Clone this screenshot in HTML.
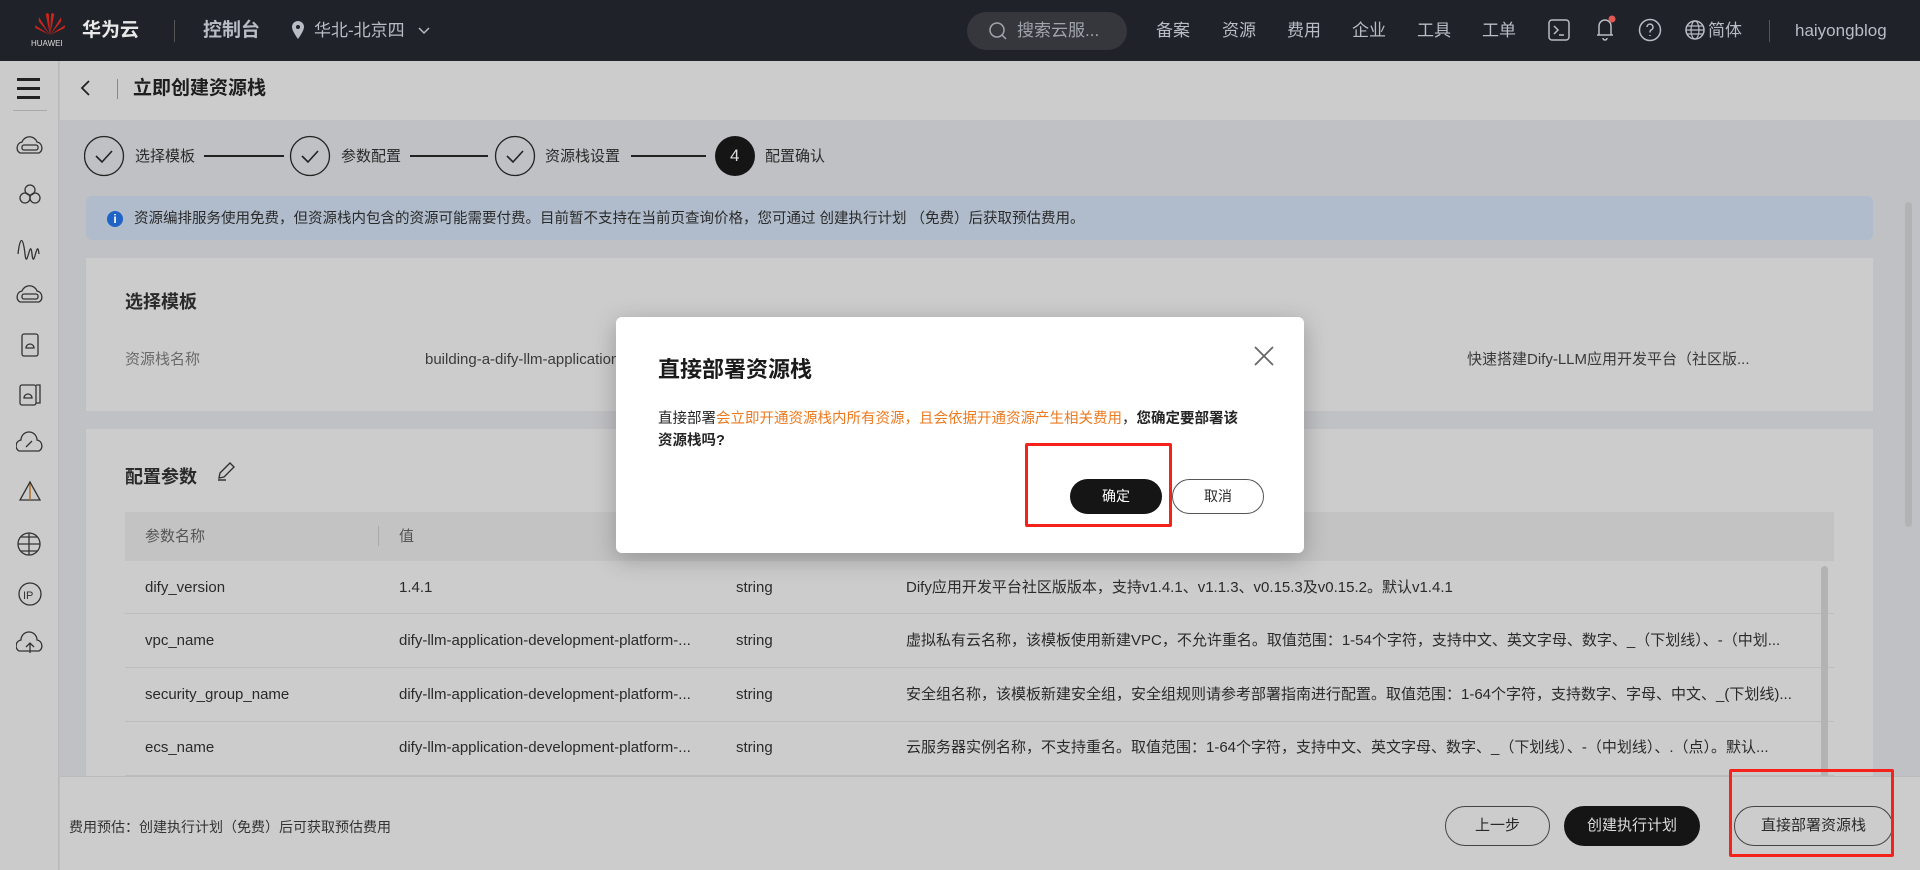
<!DOCTYPE html>
<html><head><meta charset="utf-8"><style>
*{box-sizing:border-box;margin:0;padding:0}
body{width:1920px;height:870px;overflow:hidden;background:#c0c1c4;font-family:"Liberation Sans","Noto Sans CJK SC",sans-serif;color:#2a2a2a;position:relative}
.a{position:absolute;white-space:nowrap}
.top{left:0;top:0;width:1920px;height:61px;background:#202229}
.nav{top:20px;font-size:17px;line-height:22px;color:#b8bcc4}
.side{left:0;top:61px;width:59px;height:809px;background:#cbcbcb;border-right:1px solid #b8b8b8}
.card{background:#cccccc}
.t15{font-size:15px;line-height:18px}
.row{left:125px;width:1709px;height:1px;background:#bdbdbd}
.btn{border-radius:20px;font-size:15px;text-align:center}
</style></head><body>
<div class="a top"></div>
<svg class="a" style="left:33px;top:11px" width="34" height="26" viewBox="0 0 30 24"><g fill="#c8261c"><path d="M15 22 L11 3 Q13 1 14 3Z"/><path d="M15 22 L19 3 Q17 1 16 3Z"/><path d="M15 22 L5 6 Q4 8 5 10Z"/><path d="M15 22 L25 6 Q26 8 25 10Z"/><path d="M15 22 L1 13 Q1 15 2 16Z"/><path d="M15 22 L29 13 Q29 15 28 16Z"/></g></svg>
<div class="a" style="left:31px;top:39px;font-size:8px;color:#ddd">HUAWEI</div>
<div class="a" style="left:82px;top:20px;font-size:19px;line-height:22px;color:#e8e8e8;font-weight:bold">华为云</div>
<div class="a" style="left:174px;top:20px;width:1px;height:22px;background:#555"></div>
<div class="a" style="left:203px;top:20px;font-size:19px;line-height:22px;color:#b8bcc4;font-weight:bold">控制台</div>
<svg class="a" style="left:292px;top:21px" width="12" height="18" viewBox="0 0 12 18"><path d="M6 0a6 6 0 0 0-6 6c0 4 6 12 6 12s6-8 6-12a6 6 0 0 0-6-6zm0 8a2 2 0 1 1 0-4 2 2 0 0 1 0 4z" fill="#b8bcc4"/></svg>
<div class="a nav" style="left:314px">华北-北京四</div>
<svg class="a" style="left:418px;top:27px" width="12" height="8"><path d="M1 1l5 5 5-5" stroke="#b8bcc4" fill="none" stroke-width="1.5"/></svg>
<div class="a" style="left:967px;top:12px;width:160px;height:38px;border-radius:19px;background:#35373d"></div>
<svg class="a" style="left:988px;top:21px" width="20" height="20"><circle cx="9" cy="9" r="7" stroke="#a0a4ac" fill="none" stroke-width="1.5"/><path d="M14 14l4 4" stroke="#a0a4ac" stroke-width="1.5"/></svg>
<div class="a nav" style="left:1017px;color:#a0a4ac">搜索云服...</div>
<div class="a nav" style="left:1156px">备案</div>
<div class="a nav" style="left:1222px">资源</div>
<div class="a nav" style="left:1287px">费用</div>
<div class="a nav" style="left:1352px">企业</div>
<div class="a nav" style="left:1417px">工具</div>
<div class="a nav" style="left:1482px">工单</div>
<svg class="a" style="left:1548px;top:19px" width="22" height="22"><rect x="1" y="1" width="20" height="20" rx="3" stroke="#b8bcc4" fill="none" stroke-width="1.5"/><path d="M6 7l4 4-4 4M11 16h5" stroke="#b8bcc4" fill="none" stroke-width="1.5"/></svg>
<svg class="a" style="left:1593px;top:15px" width="24" height="28"><path d="M4 20h16M6 20V11a6 6 0 0 1 12 0v9M10 23a2 2 0 0 0 4 0" stroke="#b8bcc4" fill="none" stroke-width="1.5"/><circle cx="19" cy="4" r="3.5" fill="#e05a55"/></svg>
<svg class="a" style="left:1638px;top:18px" width="24" height="24"><circle cx="12" cy="12" r="10.5" stroke="#b8bcc4" fill="none" stroke-width="1.5"/><path d="M9 9a3 3 0 1 1 4 3c-1 .5-1 1.5-1 2.5M12 17v1" stroke="#b8bcc4" fill="none" stroke-width="1.5"/></svg>
<svg class="a" style="left:1685px;top:20px" width="20" height="20"><circle cx="10" cy="10" r="9" stroke="#b8bcc4" fill="none" stroke-width="1.5"/><ellipse cx="10" cy="10" rx="4" ry="9" stroke="#b8bcc4" fill="none" stroke-width="1.2"/><path d="M1 10h18M2.5 6h15M2.5 14h15" stroke="#b8bcc4" stroke-width="1.2"/></svg>
<div class="a nav" style="left:1708px">简体</div>
<div class="a" style="left:1769px;top:20px;width:1px;height:22px;background:#555"></div>
<div class="a nav" style="left:1795px">haiyongblog</div>

<div class="a side"></div>
<div class="a" style="left:17px;top:78px;width:23px;height:3px;background:#222;box-shadow:0 9px 0 #222,0 18px 0 #222"></div>
<div class="a" style="left:13px;top:110px;width:34px;height:1px;background:#aaa"></div>
<svg class="a" style="left:16px;top:133px" width="28" height="540" fill="none" stroke="#333" stroke-width="1.3">
<g><path d="M4 20a6 6 0 0 1 2-11 8 8 0 0 1 15 0 6 6 0 0 1 2 11z"/><rect x="6" y="12" width="16" height="5" rx="2"/></g>
<g transform="translate(0,49)"><circle cx="14" cy="8" r="5"/><circle cx="9" cy="16" r="5"/><circle cx="19" cy="16" r="5"/></g>
<g transform="translate(0,99)"><path d="M2 22c2-18 5-18 7 0s5-18 7 0 5-18 7 0"/></g>
<g transform="translate(0,149)"><path d="M4 20a6 6 0 0 1 2-11 8 8 0 0 1 15 0 6 6 0 0 1 2 11z"/><rect x="6" y="12" width="16" height="5" rx="2"/></g>
<g transform="translate(0,199)"><rect x="6" y="2" width="16" height="22" rx="2"/><path d="M10 16a3 3 0 0 1 8 0z"/></g>
<g transform="translate(0,248)"><rect x="4" y="4" width="16" height="20" rx="2"/><path d="M20 4h4v18h-4M8 17a3 3 0 0 1 8 0z"/></g>
<g transform="translate(0,298)"><path d="M3 20a6 6 0 0 1 2-11 8 8 0 0 1 16 0 6 6 0 0 1 2 11zM10 16l6-6"/></g>
<g transform="translate(0,347)"><path d="M14 2L4 20h20zM14 2v18" stroke="#333"/><path d="M14 4v16" stroke="#c47a2a"/></g>
<g transform="translate(0,398)"><circle cx="13" cy="13" r="11"/><path d="M2 13h22M13 2v22M5 6h16M5 20h16"/></g>
<g transform="translate(0,448)"><circle cx="14" cy="13" r="11"/><text x="7" y="18" font-size="11" stroke="none" fill="#333" font-family="Liberation Sans">IP</text></g>
<g transform="translate(0,498)"><path d="M3 20a6 6 0 0 1 2-11 8 8 0 0 1 16 0 6 6 0 0 1 2 11zM14 22v-9M10 16l4-4 4 4"/></g>
</svg>

<div class="a" style="left:60px;top:61px;width:1860px;height:59px;background:#cccccc"></div>
<svg class="a" style="left:80px;top:79px" width="12" height="18"><path d="M9 2L2 9l7 7" stroke="#222" fill="none" stroke-width="1.8"/></svg>
<div class="a" style="left:117px;top:79px;width:1px;height:20px;background:#888"></div>
<div class="a" style="left:133px;top:78px;font-size:19px;line-height:22px;font-weight:bold;color:#1e1e1e">立即创建资源栈</div>

<svg class="a" style="left:84px;top:135px" width="800" height="42" fill="none" stroke="#222" stroke-width="1.3">
<circle cx="20" cy="21" r="19.5"/><path d="M12 21l6 6 10-11" stroke-width="1.6"/>
<line x1="120" y1="21" x2="200" y2="21" stroke-width="2"/>
<circle cx="226" cy="21" r="19.5"/><path d="M218 21l6 6 10-11" stroke-width="1.6"/>
<line x1="326" y1="21" x2="404" y2="21" stroke-width="2"/>
<circle cx="431" cy="21" r="19.5"/><path d="M423 21l6 6 10-11" stroke-width="1.6"/>
<line x1="547" y1="21" x2="622" y2="21" stroke-width="2"/>
<circle cx="651" cy="21" r="20" fill="#151515" stroke="none"/>
</svg>
<div class="a" style="left:730px;top:146px;font-size:17px;line-height:20px;color:#ddd">4</div>
<div class="a t15" style="left:135px;top:148px">选择模板</div>
<div class="a t15" style="left:341px;top:148px">参数配置</div>
<div class="a t15" style="left:545px;top:148px">资源栈设置</div>
<div class="a t15" style="left:765px;top:148px">配置确认</div>

<div class="a" style="left:86px;top:196px;width:1787px;height:44px;background:#b0bccb;border-radius:6px"></div>
<div class="a" style="left:107px;top:211px;width:16px;height:16px;border-radius:50%;background:#1f63c6;color:#fff;font-size:12px;text-align:center;line-height:16px;font-weight:bold">i</div>
<div class="a" style="left:134px;top:210px;font-size:14.5px;line-height:18px">资源编排服务使用免费，但资源栈内包含的资源可能需要付费。目前暂不支持在当前页查询价格，您可通过 创建执行计划 （免费）后获取预估费用。</div>

<div class="a card" style="left:86px;top:258px;width:1787px;height:153px"></div>
<div class="a" style="left:125px;top:291px;font-size:18px;line-height:22px;font-weight:bold">选择模板</div>
<div class="a t15" style="left:125px;top:351px;color:#6a6a6a">资源栈名称</div>
<div class="a t15" style="left:425px;top:351px;color:#3a3a3a">building-a-dify-llm-application</div>
<div class="a t15" style="left:1467px;top:351px;color:#3a3a3a">快速搭建Dify-LLM应用开发平台（社区版...</div>

<div class="a card" style="left:86px;top:429px;width:1787px;height:350px"></div>
<div class="a" style="left:125px;top:466px;font-size:18px;line-height:22px;font-weight:bold">配置参数</div>
<svg class="a" style="left:215px;top:460px" width="22" height="22" fill="none" stroke="#333" stroke-width="1.4"><path d="M4 18l1-5 10-10 4 4-10 10zM3 20h8"/></svg>
<div class="a" style="left:125px;top:512px;width:1709px;height:49px;background:#c3c3c3"></div>
<div class="a" style="left:378px;top:526px;width:1px;height:20px;background:#aaa"></div>
<div class="a t15" style="left:145px;top:528px;color:#555">参数名称</div>
<div class="a t15" style="left:399px;top:528px;color:#555">值</div>
<div class="a row" style="top:613px"></div>
<div class="a row" style="top:667px"></div>
<div class="a row" style="top:721px"></div>
<div class="a row" style="top:775px"></div>
<div class="a t15" style="left:145px;top:579px">dify_version</div>
<div class="a t15" style="left:399px;top:579px">1.4.1</div>
<div class="a t15" style="left:736px;top:579px">string</div>
<div class="a t15" style="left:906px;top:579px">Dify应用开发平台社区版版本，支持v1.4.1、v1.1.3、v0.15.3及v0.15.2。默认v1.4.1</div>
<div class="a t15" style="left:145px;top:632px">vpc_name</div>
<div class="a t15" style="left:399px;top:632px">dify-llm-application-development-platform-...</div>
<div class="a t15" style="left:736px;top:632px">string</div>
<div class="a t15" style="left:906px;top:632px">虚拟私有云名称，该模板使用新建VPC，不允许重名。取值范围：1-54个字符，支持中文、英文字母、数字、_（下划线）、-（中划...</div>
<div class="a t15" style="left:145px;top:686px">security_group_name</div>
<div class="a t15" style="left:399px;top:686px">dify-llm-application-development-platform-...</div>
<div class="a t15" style="left:736px;top:686px">string</div>
<div class="a t15" style="left:906px;top:686px">安全组名称，该模板新建安全组，安全组规则请参考部署指南进行配置。取值范围：1-64个字符，支持数字、字母、中文、_(下划线)...</div>
<div class="a t15" style="left:145px;top:739px">ecs_name</div>
<div class="a t15" style="left:399px;top:739px">dify-llm-application-development-platform-...</div>
<div class="a t15" style="left:736px;top:739px">string</div>
<div class="a t15" style="left:906px;top:739px">云服务器实例名称，不支持重名。取值范围：1-64个字符，支持中文、英文字母、数字、_（下划线）、-（中划线）、.（点）。默认...</div>
<div class="a" style="left:1821px;top:566px;width:7px;height:212px;border-radius:4px;background:#b3b3b3"></div>
<div class="a" style="left:1905px;top:202px;width:7px;height:325px;border-radius:4px;background:#b3b3b3"></div>

<div class="a" style="left:60px;top:776px;width:1860px;height:94px;background:#cccccc;border-top:1px solid #bbb"></div>
<div class="a" style="left:69px;top:818px;font-size:14px;line-height:18px;color:#333">费用预估：创建执行计划（免费）后可获取预估费用</div>
<div class="a btn" style="left:1445px;top:806px;width:105px;height:40px;border:1px solid #444;line-height:38px">上一步</div>
<div class="a btn" style="left:1564px;top:806px;width:136px;height:40px;background:#151515;color:#ddd;line-height:40px">创建执行计划</div>
<div class="a btn" style="left:1734px;top:806px;width:159px;height:40px;border:1px solid #444;line-height:38px">直接部署资源栈</div>
<div class="a" style="left:1729px;top:769px;width:165px;height:88px;border:3px solid #f5221b;border-radius:2px"></div>

<div class="a" style="left:616px;top:317px;width:688px;height:236px;background:#fff;border-radius:6px;box-shadow:0 6px 24px rgba(0,0,0,.25)"></div>
<div class="a" style="left:658px;top:357px;font-size:22px;line-height:26px;font-weight:bold;color:#1a1a1a">直接部署资源栈</div>
<svg class="a" style="left:1253px;top:345px" width="22" height="22"><path d="M2 2l18 18M20 2L2 20" stroke="#666" stroke-width="1.8"/></svg>
<div class="a" style="left:658px;top:408px;font-size:14.5px;line-height:22px;color:#252525;white-space:normal;width:620px">直接部署<span style="color:#ec7a1f">会立即开通资源栈内所有资源，且会依据开通资源产生相关费用</span>，<b>您确定要部署该</b><br><b>资源栈吗?</b></div>
<div class="a btn" style="left:1070px;top:479px;width:92px;height:35px;background:#151515;color:#fff;line-height:35px;font-size:14px">确定</div>
<div class="a btn" style="left:1172px;top:479px;width:92px;height:35px;border:1px solid #555;line-height:33px;font-size:14px">取消</div>
<div class="a" style="left:1025px;top:443px;width:147px;height:84px;border:3px solid #f5221b;border-radius:2px"></div>
</body></html>
